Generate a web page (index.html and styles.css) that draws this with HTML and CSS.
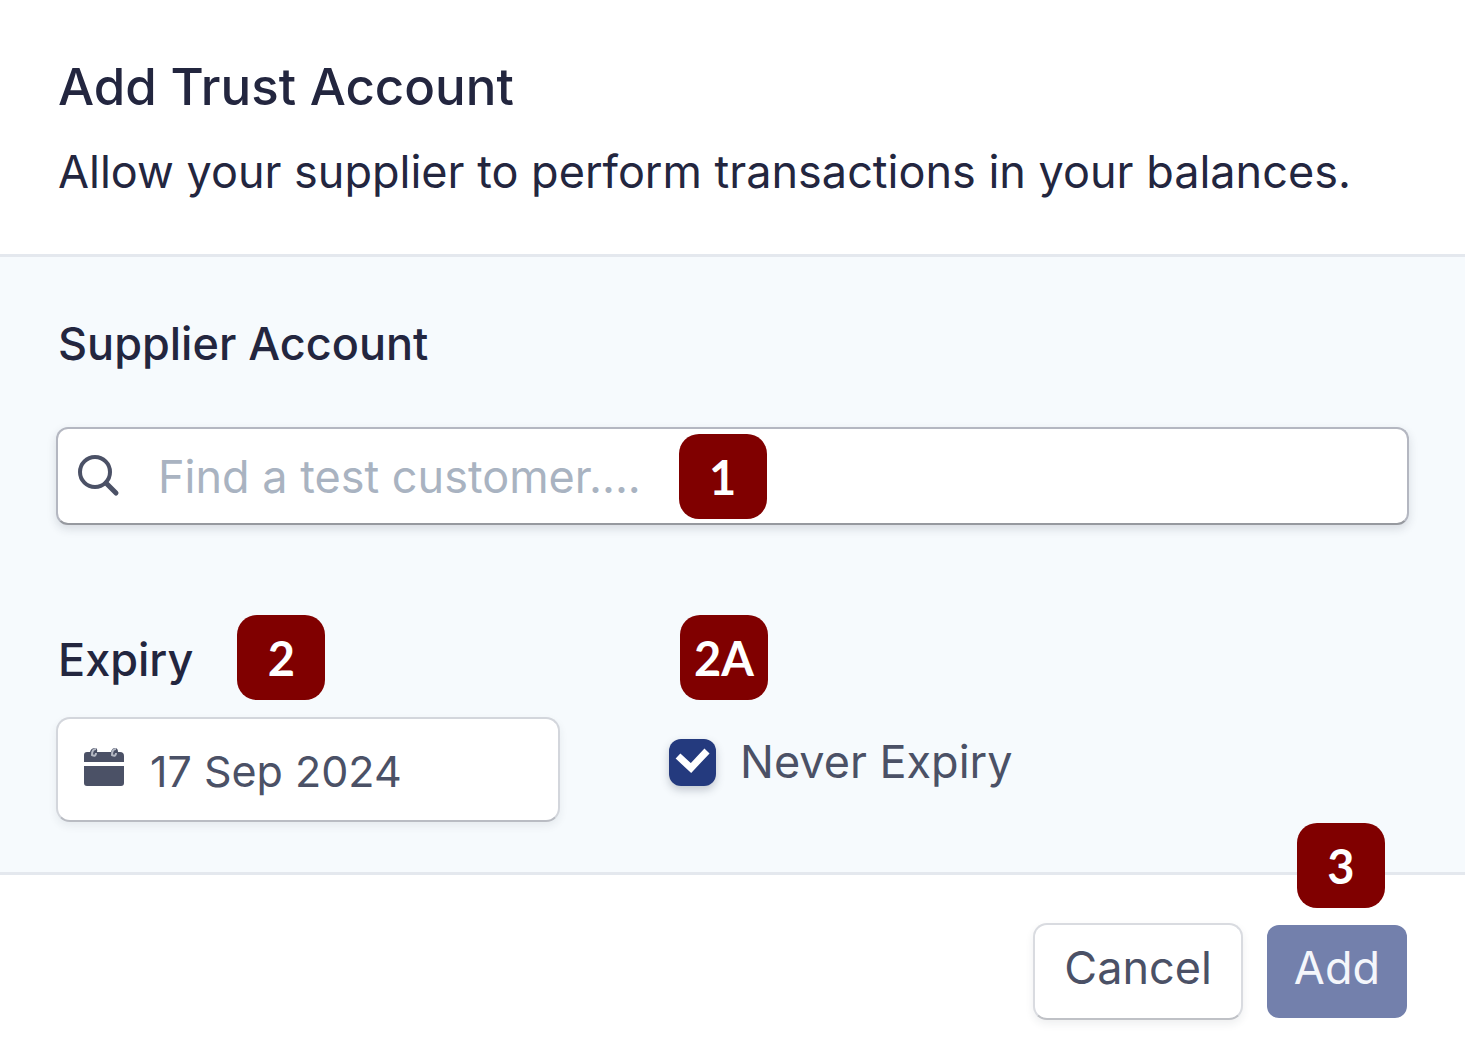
FILE: index.html
```html
<!DOCTYPE html>
<html lang="en">
<head>
    <meta charset="UTF-8">
    <meta name="viewport" content="width=device-width, initial-scale=1.0">
    <title>Add Trust Account</title>
    <link rel="stylesheet" href="styles.css">
</head>
<body>
    <form class="dialog">
        <header class="dialog-header">
            <h1>Add Trust Account</h1>
            <p>Allow your supplier to perform transactions in your balances.</p>
        </header>

        <main class="dialog-body">
            <label class="label" for="supplier">Supplier Account</label>
            <div class="search">
                <svg class="search-icon" viewBox="0 0 42 42" aria-hidden="true">
                    <circle cx="17" cy="17" r="15" fill="none" stroke="currentColor" stroke-width="4"/>
                    <path d="M28 28l10 10" stroke="currentColor" stroke-width="5" stroke-linecap="round"/>
                </svg>
                <input type="text" id="supplier" placeholder="Find a test customer....">
                <span class="badge badge-search">1</span>
            </div>

            <div class="expiry">
                <div class="expiry-date">
                    <div class="expiry-label">
                        <label class="label" for="expiry">Expiry</label>
                        <span class="badge">2</span>
                    </div>
                    <div class="date">
                        <svg class="date-icon" viewBox="0 0 42 42" aria-hidden="true">
                            <path fill="currentColor" d="M2 15V8q0-3 3-3h3q1-4 5-4 3 0 2 4h14q1-4 4-4 3 0 3 4h2q4 0 4 4v6zM2 19h40v17q0 3-3 3H5q-3 0-3-3z"/>
                            <path fill="none" stroke="#b4b8c3" stroke-width="2" d="M14 2q-4 0-4 6 4 2 4-2M34 2q-4 0-4 6 4 2 4-2"/>
                        </svg>
                        <input type="text" id="expiry" value="17 Sep 2024">
                    </div>
                </div>
                <div class="expiry-never">
                    <span class="badge">2A</span>
                    <label class="check">
                        <input type="checkbox" checked>
                        Never Expiry
                    </label>
                </div>
            </div>
        </main>

        <footer class="dialog-footer">
            <button type="button" class="btn">Cancel</button>
            <div class="submit">
                <button type="submit" class="btn btn-primary">Add</button>
                <span class="badge badge-submit">3</span>
            </div>
        </footer>
    </form>
</body>
</html>
```
FILE: styles.css
```css
:root {
    --text-dark: #23263f;
    --text: #4b5166;
    --placeholder: #a9b3c1;
    --line: #e4e8ee;
    --panel: #f6fafd;
    --primary: #243a7e;
    --badge: #800000;
}

* {
    box-sizing: border-box;
    margin: 0;
    padding: 0;
}

body {
    background: #fff;
    color: var(--text);
    font-family: Inter, sans-serif;
    font-size: 45px;
}

input, button {
    font: inherit;
    color: inherit;
}

.dialog-header {
    padding: 52px 58px 48px;
    color: var(--text-dark);
}

h1 {
    font-size: 51px;
    font-weight: 500;
    line-height: 70px;
    margin-bottom: 16px;
}

.dialog-header p {
    line-height: 68px;
}

.dialog-body {
    padding: 52px 56px 50px;
    background: var(--panel);
    border-top: 3px solid var(--line);
    border-bottom: 3px solid var(--line);
}

.label {
    display: block;
    padding-left: 2px;
    color: var(--text-dark);
    font-weight: 500;
    line-height: 70px;
}

.search {
    position: relative;
    display: flex;
    align-items: center;
    gap: 38px;
    height: 98px;
    margin-top: 48px;
    padding: 0 20px;
    background: #fff;
    border: 2px solid #b4b7c1;
    border-bottom-color: #96999f;
    border-radius: 12px;
    box-shadow: 0 4px 10px rgba(40, 50, 70, 0.15);
}

.search-icon,
.date-icon {
    flex: none;
    width: 42px;
    height: 42px;
}

.search input,
.date input {
    flex: 1;
    min-width: 0;
    height: 100%;
    background: none;
    border: 0;
    outline: 0;
}

.search input::placeholder {
    color: var(--placeholder);
    opacity: 1;
}

.badge {
    display: flex;
    align-items: center;
    justify-content: center;
    width: 88px;
    height: 85px;
    background: var(--badge);
    border-radius: 20px;
    color: #fff;
    font-family: Lato, sans-serif;
    font-size: 47px;
    font-weight: 700;
}

.badge-search {
    position: absolute;
    top: 5px;
    left: 46%;
}

.expiry {
    display: grid;
    grid-template-columns: 504px 1fr;
    gap: 109px;
    margin-top: 90px;
}

.expiry-label {
    display: flex;
    align-items: center;
    gap: 44px;
    margin-bottom: 17px;
}

.expiry-label .label {
    padding-top: 4px;
}

.date {
    display: flex;
    align-items: center;
    gap: 26px;
    height: 105px;
    padding: 0 24px 4px;
    background: #fff;
    border: 2px solid #d3d6dc;
    border-bottom-color: #b9bcc3;
    border-radius: 14px;
    box-shadow: 0 4px 8px rgba(40, 50, 70, 0.08);
}

.date input {
    padding-top: 6px;
    font-size: 43px;
}

.expiry-never .badge {
    margin: 0 0 24px 11px;
}

.check {
    display: flex;
    align-items: center;
    gap: 24px;
    line-height: 76px;
}

.check input {
    appearance: none;
    width: 47px;
    height: 47px;
    background: var(--primary) url("data:image/svg+xml,%3Csvg xmlns='http://www.w3.org/2000/svg' viewBox='0 0 47 47'%3E%3Cpath d='M9 17l13 12 16-17' fill='none' stroke='white' stroke-width='7'/%3E%3C/svg%3E");
    border-radius: 12px;
    box-shadow: 0 4px 8px rgba(40, 50, 70, 0.25);
}

.dialog-footer {
    display: flex;
    justify-content: flex-end;
    align-items: center;
    gap: 24px;
    padding: 48px 58px 16px;
}

.btn {
    height: 97px;
    padding: 0 29px 8px;
    background: #fff;
    border: 2px solid #d9dbe0;
    border-bottom-color: #bfc1c6;
    border-radius: 14px;
    box-shadow: 0 4px 8px rgba(40, 50, 70, 0.08);
}

.submit {
    position: relative;
}

.btn-primary {
    display: block;
    height: 93px;
    padding: 0 27px 8px;
    background: #7380ac;
    border: 0;
    border-radius: 12px;
    box-shadow: none;
    color: #f4f6fb;
}

.badge-submit {
    position: absolute;
    right: 22px;
    bottom: 110px;
}
```
